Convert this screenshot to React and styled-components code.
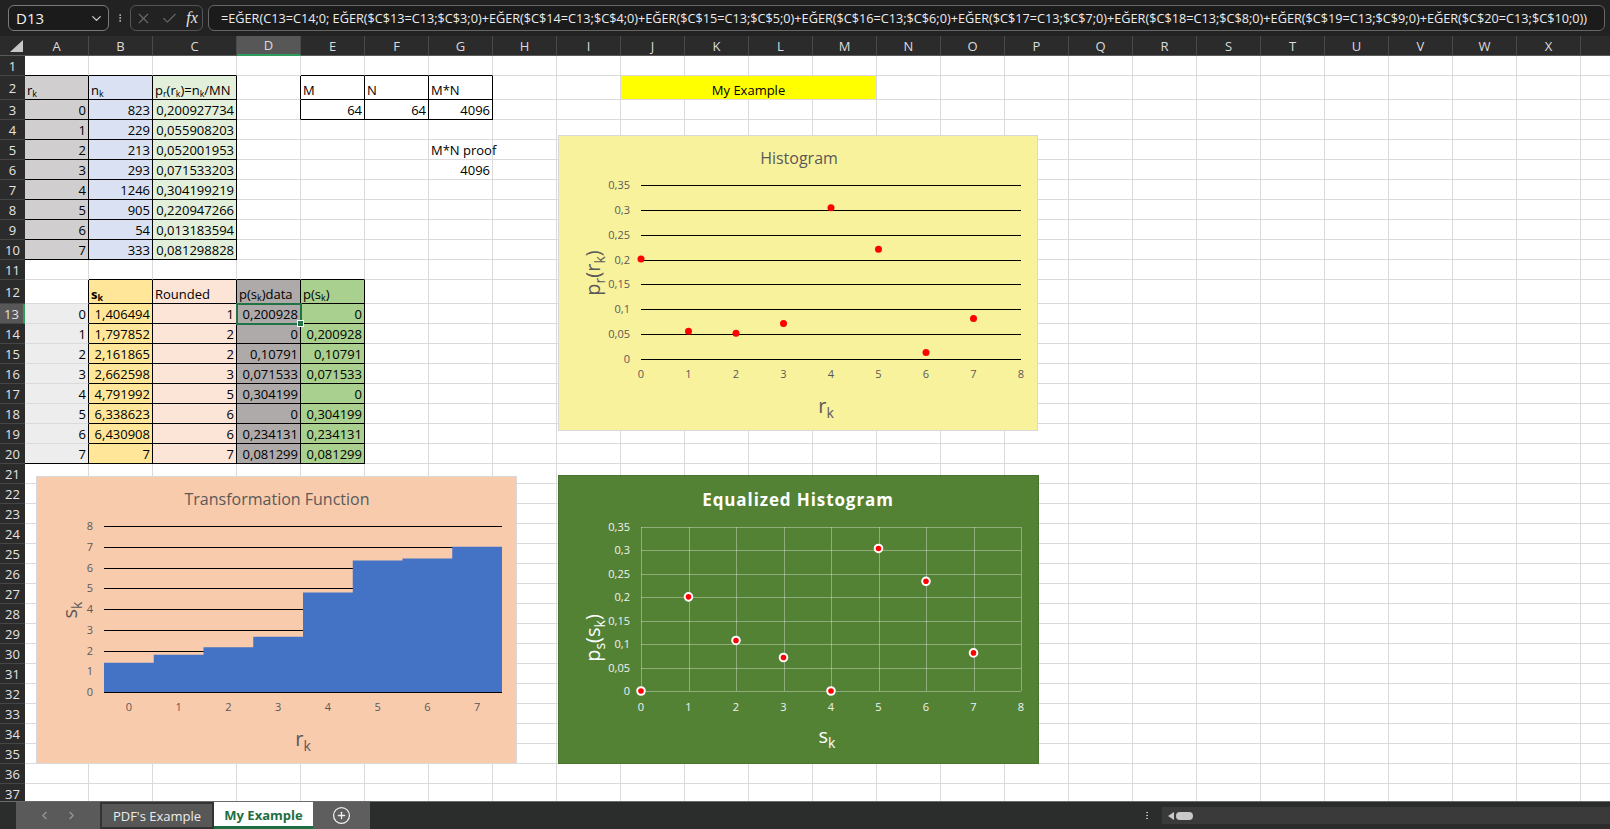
import styled, { createGlobalStyle, css } from "styled-components";
import { Fragment } from "react";
import {
  ChevronDown,
  X,
  Check,
  EllipsisVertical,
  ChevronLeft,
  ChevronRight,
  CirclePlus,
} from "lucide-react";

const FONT = "'Open Sans', 'Noto Sans', sans-serif";
const GRID = "#dadada";

const GlobalStyle = createGlobalStyle`
  body {
    margin: 0;
    background: #fff;
    overflow: hidden;
    font-family: ${FONT};
  }
`;

const Frame = styled.div`
  width: 1610px;
  height: 829px;
  display: flex;
  flex-direction: column;
  overflow: hidden;
`;

/* ---------- formula bar ---------- */

const TopBar = styled.div`
  height: 36px;
  background: #222;
  display: flex;
  align-items: center;
  padding-left: 8px;
  color: #e6e6e6;
`;

const NameBox = styled.div`
  width: 101px;
  height: 26px;
  box-sizing: border-box;
  border: 1px solid #7a7a7a;
  border-radius: 6px;
  background: #1b1b1b;
  display: flex;
  align-items: center;
  justify-content: space-between;
  padding: 0 4px 0 7px;
  font-size: 15px;
  color: #f2f2f2;
`;

const Dots = styled.div`
  width: 10px;
  margin: 0 5px 0 6px;
  display: flex;
  justify-content: center;
  color: #cfcfcf;
`;

const FxGroup = styled.div`
  width: 73px;
  height: 26px;
  box-sizing: border-box;
  border: 1px solid #555;
  border-radius: 6px;
  display: flex;
  align-items: center;
  justify-content: space-around;
  margin-right: 5px;
  color: #6a6a6a;
`;

const Fx = styled.span`
  font-family: "Liberation Serif", serif;
  font-style: italic;
  font-size: 16px;
  color: #e6e6e6;
`;

const FormulaBox = styled.div`
  flex: 1;
  height: 26px;
  margin-right: 5px;
  box-sizing: border-box;
  border: 1px solid #666;
  border-radius: 6px;
  background: #1b1b1b;
  display: flex;
  align-items: center;
  padding-left: 12px;
  font-size: 12.7px;
  white-space: nowrap;
  overflow: hidden;
  color: #ececec;
`;

/* ---------- sheet ---------- */

const COLS = "ABCDEFGHIJKLMNOPQRSTUVWXY".split("");
const colW = (c) => (c === "C" ? 84 : 64);
const ROWS = Array.from({ length: 37 }, (_, i) => i + 1);
const rowH = (r) => (r === 2 || r === 12 ? 24 : 20);

const Sheet = styled.div`
  position: relative;
  height: 765px;
  overflow: hidden;
  background: #fff;
  display: grid;
  grid-template-columns: 25px ${COLS.map((c) => colW(c) + "px").join(" ")};
  grid-template-rows: 20px ${ROWS.map((r) => rowH(r) + "px").join(" ")};
`;

const Corner = styled.div`
  background: #2b2b2b;
  border-bottom: 1px solid #5a5a5a;
  display: flex;
  align-items: flex-end;
  justify-content: flex-end;
  padding: 0 2px 3px 0;
`;

const ColHead = styled.div`
  box-sizing: border-box;
  background: ${(p) => (p.$active ? "#575757" : "#2b2b2b")};
  border-right: 1px solid #4a4a4a;
  border-bottom: ${(p) => (p.$active ? "2px solid #2e9c5c" : "1px solid #5a5a5a")};
  color: #dcdcdc;
  font-size: 13px;
  display: flex;
  align-items: center;
  justify-content: center;
`;

const RowHead = styled.div`
  box-sizing: border-box;
  background: ${(p) => (p.$active ? "#575757" : "#2b2b2b")};
  border-bottom: 1px solid #454545;
  border-right: ${(p) => (p.$active ? "2px solid #2e9c5c" : "none")};
  color: #e4e4e4;
  font-size: 13px;
  display: flex;
  align-items: center;
  justify-content: center;
`;

const Cell = styled.div`
  box-sizing: border-box;
  grid-column: span ${(p) => p.$span || 1};
  background: ${(p) => p.$bg || "transparent"};
  border-right: 1px solid ${(p) => (p.$rb ? "#000" : GRID)};
  border-bottom: 1px solid ${(p) => (p.$bb ? "#000" : GRID)};
  display: flex;
  align-items: flex-end;
  justify-content: ${(p) =>
    p.$align === "right" ? "flex-end" : p.$align === "center" ? "center" : "flex-start"};
  padding: 0 2px 0 2px;
  font-size: 13px;
  line-height: 18px;
  color: #000;
  white-space: nowrap;
  font-weight: ${(p) => (p.$bold ? 700 : 400)};
  ${(p) =>
    p.$selected &&
    css`
      position: relative;
      outline: 2px solid #217346;
      outline-offset: -1px;
      z-index: 2;
      &::after {
        content: "";
        position: absolute;
        right: -4px;
        bottom: -4px;
        width: 5px;
        height: 5px;
        background: #217346;
        border: 1px solid #fff;
      }
    `}
`;

const Txt = styled.span``;

const Sub = styled.span`
  font-size: 0.68em;
  vertical-align: -0.25em;
  line-height: 0;
`;

/* ---------- data ---------- */

const tbl1 = [
  ["0", "823", "0,200927734"],
  ["1", "229", "0,055908203"],
  ["2", "213", "0,052001953"],
  ["3", "293", "0,071533203"],
  ["4", "1246", "0,304199219"],
  ["5", "905", "0,220947266"],
  ["6", "54", "0,013183594"],
  ["7", "333", "0,081298828"],
];

const tbl3 = [
  ["0", "1,406494", "1", "0,200928", "0"],
  ["1", "1,797852", "2", "0", "0,200928"],
  ["2", "2,161865", "2", "0,10791", "0,10791"],
  ["3", "2,662598", "3", "0,071533", "0,071533"],
  ["4", "4,791992", "5", "0,304199", "0"],
  ["5", "6,338623", "6", "0", "0,304199"],
  ["6", "6,430908", "6", "0,234131", "0,234131"],
  ["7", "7", "7", "0,081299", "0,081299"],
];

const cells = {};
const put = (k, o) => (cells[k] = o);

const t1bg = ["#d0cece", "#d9e1f2", "#e2efda"];
put("A2", { v: <>r<Sub>k</Sub></>, bg: t1bg[0], box: true });
put("B2", { v: <>n<Sub>k</Sub></>, bg: t1bg[1], box: true });
put("C2", {
  v: (
    <>
      p<Sub>r</Sub>(r<Sub>k</Sub>)=n<Sub>k</Sub>/MN
    </>
  ),
  bg: t1bg[2],
  box: true,
});
tbl1.forEach((row, i) =>
  ["A", "B", "C"].forEach((c, j) =>
    put(c + (3 + i), { v: row[j], bg: t1bg[j], box: true, align: "right" })
  )
);

put("E2", { v: "M", box: true });
put("F2", { v: "N", box: true });
put("G2", { v: "M*N", box: true });
put("E3", { v: "64", box: true, align: "right" });
put("F3", { v: "64", box: true, align: "right" });
put("G3", { v: "4096", box: true, align: "right" });
put("G5", { v: "M*N proof" });
put("G6", { v: "4096", align: "right" });
put("J2", { v: "My Example", bg: "#ffff00", span: 4, align: "center" });

const t3bg = ["#ffe699", "#fce4d6", "#aeaaaa", "#a9d08e"];
put("B12", { v: <>s<Sub>k</Sub></>, bg: t3bg[0], box: true, bold: true });
put("C12", { v: "Rounded", bg: t3bg[1], box: true });
put("D12", { v: <>p(s<Sub>k</Sub>)data</>, bg: t3bg[2], box: true });
put("E12", { v: <>p(s<Sub>k</Sub>)</>, bg: t3bg[3], box: true });
tbl3.forEach((row, i) => {
  const r = 13 + i;
  put("A" + r, { v: row[0], bg: "#ededed", align: "right", bb: r === 20 });
  ["B", "C", "D", "E"].forEach((c, j) =>
    put(c + r, { v: row[j + 1], bg: t3bg[j], box: true, align: "right" })
  );
});

const merged = new Set(["K2", "L2", "M2"]);
const isBox = (ci, r) => !!(COLS[ci] && cells[COLS[ci] + r] && cells[COLS[ci] + r].box);

/* ---------- charts ---------- */

const ChartBox = styled.div`
  position: absolute;
  left: ${(p) => p.$left}px;
  top: ${(p) => p.$top}px;
  width: ${(p) => p.$w}px;
  height: ${(p) => p.$h}px;
  box-sizing: border-box;
  background: ${(p) => p.$bg};
  border: 1px solid ${(p) => p.$line || "#d9d9d9"};
  svg {
    display: block;
    font-family: ${FONT};
  }
`;

const ChartTitle = styled.text`
  font-size: ${(p) => (p.$bold ? 17 : 16)}px;
  font-weight: ${(p) => (p.$bold ? 700 : 400)};
  letter-spacing: ${(p) => (p.$bold ? "0.9px" : "0")};
  fill: ${(p) => p.$color || "#595959"};
  text-anchor: middle;
`;

const Tick = styled.text`
  font-size: 11px;
  fill: ${(p) => p.$color || "#595959"};
  text-anchor: ${(p) => p.$anchor || "middle"};
`;

const AxisTitle = styled.text`
  font-size: 20px;
  fill: ${(p) => p.$color || "#595959"};
  text-anchor: middle;
`;

const fmt = (v) => String(+v.toFixed(2)).replace(".", ",");
const px = (v) => Math.round(v) + 0.5;

function SubLabel({ x, y, base, sub, tail, sub2, end, rotate, color }) {
  return (
    <AxisTitle
      x={x}
      y={y}
      $color={color}
      transform={rotate ? `rotate(-90 ${x} ${y})` : undefined}
    >
      {base}
      <tspan dy="5" fontSize="14">
        {sub}
      </tspan>
      {tail && <tspan dy="-5">{tail}</tspan>}
      {sub2 && (
        <tspan dy="5" fontSize="14">
          {sub2}
        </tspan>
      )}
      {end && <tspan dy="-5">{end}</tspan>}
    </AxisTitle>
  );
}

const prData = [
  0.200927734, 0.055908203, 0.052001953, 0.071533203, 0.304199219, 0.220947266,
  0.013183594, 0.081298828,
];
const skData = [1.406494, 1.797852, 2.161865, 2.662598, 4.791992, 6.338623, 6.430908, 7];
const psData = [0, 0.200928, 0.10791, 0.071533, 0, 0.304199, 0.234131, 0.081299];
const probTicks = [0, 0.05, 0.1, 0.15, 0.2, 0.25, 0.3, 0.35];

function HistogramChart() {
  const P = { x0: 82, x1: 462, y0: 49, y1: 223 };
  const sx = (x) => P.x0 + (x / 8) * (P.x1 - P.x0);
  const sy = (v) => P.y1 - (v / 0.35) * (P.y1 - P.y0);
  return (
    <ChartBox $left={558} $top={99} $w={480} $h={296} $bg="#f9f29c">
      <svg width="478" height="294">
        <ChartTitle x="240" y="28">
          Histogram
        </ChartTitle>
        {probTicks.map((v) => (
          <g key={v}>
            <line x1={P.x0} x2={P.x1} y1={px(sy(v))} y2={px(sy(v))} stroke="#000" />
            <Tick x="71" y={sy(v) + 4} $anchor="end">
              {fmt(v)}
            </Tick>
          </g>
        ))}
        {Array.from({ length: 9 }, (_, i) => (
          <Tick key={i} x={sx(i)} y="242">
            {i}
          </Tick>
        ))}
        {prData.map((v, i) => (
          <circle key={i} cx={sx(i)} cy={sy(v)} r="3.5" fill="#ff0000" />
        ))}
        <SubLabel x={267} y={277} base="r" sub="k" />
        <SubLabel x={41} y={137} base="p" sub="r" tail="(r" sub2="k" end=")" rotate />
      </svg>
    </ChartBox>
  );
}

function TransformChart() {
  const P = { x0: 67, x1: 465, y0: 49, y1: 215 };
  const bw = (P.x1 - P.x0) / 8;
  const sy = (v) => P.y1 - (v / 8) * (P.y1 - P.y0);
  let d = `M${P.x0},${P.y1}`;
  skData.forEach((v, i) => {
    d += ` L${P.x0 + i * bw},${sy(v)} L${P.x0 + (i + 1) * bw},${sy(v)}`;
  });
  d += ` L${P.x1},${P.y1} Z`;
  return (
    <ChartBox $left={36} $top={440} $w={481} $h={288} $bg="#f8cbad">
      <svg width="479" height="286">
        <ChartTitle x="240" y="28">
          Transformation Function
        </ChartTitle>
        {Array.from({ length: 9 }, (_, i) => (
          <g key={i}>
            <line x1={P.x0} x2={P.x1} y1={px(sy(i))} y2={px(sy(i))} stroke="#000" />
            <Tick x="56" y={sy(i) + 4} $anchor="end">
              {i}
            </Tick>
          </g>
        ))}
        <path d={d} fill="#4472c4" />
        {skData.map((_, i) => (
          <Tick key={i} x={P.x0 + (i + 0.5) * bw} y="234">
            {i}
          </Tick>
        ))}
        <SubLabel x={266} y={269} base="r" sub="k" />
        <SubLabel x={40} y={133} base="s" sub="k" rotate />
      </svg>
    </ChartBox>
  );
}

function EqualizedChart() {
  const P = { x0: 82, x1: 462, y0: 51, y1: 215 };
  const sx = (x) => P.x0 + (x / 8) * (P.x1 - P.x0);
  const sy = (v) => P.y1 - (v / 0.35) * (P.y1 - P.y0);
  const grid = "rgba(255,255,255,0.35)";
  const ink = "#f2f2f2";
  return (
    <ChartBox $left={558} $top={439} $w={481} $h={289} $bg="#548235" $line="#4a7430">
      <svg width="479" height="287">
        <ChartTitle x="239" y="30" $bold $color="#fff">
          Equalized Histogram
        </ChartTitle>
        {probTicks.map((v) => (
          <g key={v}>
            <line x1={P.x0} x2={P.x1} y1={px(sy(v))} y2={px(sy(v))} stroke={grid} />
            <Tick x="71" y={sy(v) + 4} $anchor="end" $color={ink}>
              {fmt(v)}
            </Tick>
          </g>
        ))}
        {Array.from({ length: 9 }, (_, i) => (
          <g key={i}>
            <line x1={px(sx(i))} x2={px(sx(i))} y1={P.y0} y2={P.y1} stroke={grid} />
            <Tick x={sx(i)} y="235" $color={ink}>
              {i}
            </Tick>
          </g>
        ))}
        {psData.map((v, i) => (
          <circle key={i} cx={sx(i)} cy={sy(v)} r="3.8" fill="#ff0000" stroke="#fff" strokeWidth="2" />
        ))}
        <SubLabel x={268} y={267} base="s" sub="k" color="#fff" />
        <SubLabel x={41} y={162} base="p" sub="s" tail="(s" sub2="k" end=")" rotate color="#fff" />
      </svg>
    </ChartBox>
  );
}

/* ---------- sheet tabs ---------- */

const TabBar = styled.div`
  height: 28px;
  background: #2b2d2d;
  border-top: 1px solid #6a6a6a;
  box-sizing: border-box;
  display: flex;
  align-items: stretch;
  padding-left: 16px;
  font-size: 13px;
`;

const NavArea = styled.div`
  width: 84px;
  background: #5a5a5a;
  display: flex;
  align-items: center;
  justify-content: center;
  gap: 14px;
  color: #9a9a9a;
`;

const Tab = styled.div`
  width: ${(p) => p.$w}px;
  box-sizing: border-box;
  display: flex;
  align-items: center;
  justify-content: center;
  ${(p) =>
    p.$active
      ? css`
          background: #fff;
          color: #1e6e42;
          font-weight: 700;
          border-bottom: 3px solid #1e6e42;
          padding-top: 2px;
        `
      : css`
          background: #575757;
          color: #ececec;
          border: 2px solid #333;
        `}
`;

const AddArea = styled.div`
  width: 57px;
  background: #5e5e5e;
  display: flex;
  align-items: center;
  justify-content: center;
  color: #f0f0f0;
`;

const Spacer = styled.div`
  flex: 1;
`;

const VDots = styled.div`
  width: 10px;
  margin-right: 10px;
  display: flex;
  align-items: center;
  justify-content: center;
  color: #d0d0d0;
`;

const ScrollTrack = styled.div`
  flex: 0 0 442px;
  margin: 5px 0 5px;
  background: #3a3a3a;
  display: flex;
  align-items: center;
  padding-left: 6px;
  gap: 2px;
`;

const Arrow = styled.div`
  width: 0;
  height: 0;
  border-top: 4px solid transparent;
  border-bottom: 4px solid transparent;
  border-right: 6px solid #c8c8c8;
`;

const Thumb = styled.div`
  width: 17px;
  height: 8px;
  border-radius: 4px;
  background: #c8c8c8;
`;

const formula =
  "=EĞER(C13=C14;0; EĞER($C$13=C13;$C$3;0)+EĞER($C$14=C13;$C$4;0)+EĞER($C$15=C13;$C$5;0)+EĞER($C$16=C13;$C$6;0)+EĞER($C$17=C13;$C$7;0)+EĞER($C$18=C13;$C$8;0)+EĞER($C$19=C13;$C$9;0)+EĞER($C$20=C13;$C$10;0))";

export default function App() {
  return (
    <>
      <GlobalStyle />
      <Frame>
        <TopBar>
          <NameBox>
            D13
            <ChevronDown size={15} color="#cfcfcf" />
          </NameBox>
          <Dots>
            <EllipsisVertical size={14} />
          </Dots>
          <FxGroup>
            <X size={17} strokeWidth={1.5} />
            <Check size={17} strokeWidth={1.5} />
            <Fx>fx</Fx>
          </FxGroup>
          <FormulaBox>{formula}</FormulaBox>
        </TopBar>

        <Sheet>
          <Corner>
            <svg width="13" height="12">
              <polygon points="13,0 13,12 0,12" fill="#c8c8c8" />
            </svg>
          </Corner>
          {COLS.map((c) => (
            <ColHead key={c} $active={c === "D"}>
              {c === "Y" ? "" : c}
            </ColHead>
          ))}
          {ROWS.map((r) => (
            <Fragment key={r}>
              <RowHead $active={r === 13}>{r}</RowHead>
              {COLS.map((c, ci) => {
                const key = c + r;
                if (merged.has(key)) return null;
                const cell = cells[key] || {};
                return (
                  <Cell
                    key={key}
                    $span={cell.span}
                    $bg={cell.bg}
                    $align={cell.align}
                    $bold={cell.bold}
                    $rb={isBox(ci, r) || isBox(ci + 1, r)}
                    $bb={isBox(ci, r) || isBox(ci, r + 1) || cell.bb}
                    $selected={key === "D13"}
                  >
                    <Txt>{cell.v}</Txt>
                  </Cell>
                );
              })}
            </Fragment>
          ))}
          <HistogramChart />
          <TransformChart />
          <EqualizedChart />
        </Sheet>

        <TabBar>
          <NavArea>
            <ChevronLeft size={13} />
            <ChevronRight size={13} />
          </NavArea>
          <Tab $w={114}>PDF's Example</Tab>
          <Tab $w={99} $active>
            My Example
          </Tab>
          <AddArea>
            <CirclePlus size={19} strokeWidth={1.6} />
          </AddArea>
          <Spacer />
          <VDots>
            <EllipsisVertical size={13} />
          </VDots>
          <ScrollTrack>
            <Arrow />
            <Thumb />
          </ScrollTrack>
        </TabBar>
      </Frame>
    </>
  );
}
